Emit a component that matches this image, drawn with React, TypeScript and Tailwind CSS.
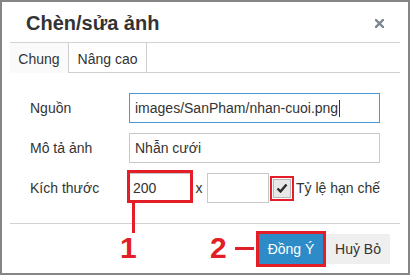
import React from 'react';

const App = () => {
  return (
    <div className="relative w-[410px] h-[275px] overflow-hidden bg-white border-2 border-[#858585] px-2 font-['Liberation_Sans',Arial,sans-serif] text-[#333]">
      {/* Header */}
      <div className="h-[41px] border-b border-[#d2d2d2] flex items-center justify-between pl-4 pr-4 pt-[2px]">
        <h1 className="text-[20px] font-bold leading-none">Chèn/sửa ảnh</h1>
        <svg width="9" height="9" viewBox="0 0 9 9" className="text-[#7d8590]">
          <path d="M1 1 L8 8 M8 1 L1 8" stroke="currentColor" strokeWidth="2.4" strokeLinecap="square" />
        </svg>
      </div>

      {/* Tabs */}
      <div className="flex h-[30px] text-[14px]">
        <div className="w-[59px] bg-[#fafafa] border-r border-[#cfcfcf] flex items-center justify-center pt-[3px]">Chung</div>
        <div className="w-[78px] border-r border-b border-[#cfcfcf] flex items-center justify-center pt-[3px]">Nâng cao</div>
        <div className="flex-1 border-b border-[#cfcfcf]"></div>
      </div>

      {/* Form */}
      <div className="pt-5 flex flex-col gap-[10px] text-[14px]">
        <div className="flex items-center">
          <div className="w-[119px] pl-5">Nguồn</div>
          <div className="w-[251px] h-[30px] border border-[#4b98d3] flex items-center pl-[5px]">
            images/SanPham/nhan-cuoi.png
            <span className="w-px h-[17px] bg-[#333] ml-px"></span>
          </div>
        </div>
        <div className="flex items-center">
          <div className="w-[119px] pl-5">Mô tả ảnh</div>
          <div className="w-[251px] h-[30px] border border-[#c8c8c8] flex items-center pl-[5px]">Nhẫn cưới</div>
        </div>
        <div className="flex items-center">
          <div className="w-[119px] pl-5">Kích thước</div>
          <div className="relative w-[62px] h-[30px] border border-[#c8c8c8] flex items-center pl-[3px]">
            200
            <div className="absolute -left-[3px] -top-[4px] w-[66px] h-[33px] border-[3px] border-[#e31e26]"></div>
          </div>
          <span className="w-[16px] text-center">x</span>
          <div className="w-[62px] h-[30px] border border-[#c8c8c8]"></div>
          <div className="ml-[1px] w-[24px] h-[25px] border-2 border-[#e31e26] flex items-center justify-center">
            <div className="w-[18px] h-[19px] bg-[#e8e8e8] border border-[#b8b8b8] flex items-center justify-center">
              <svg width="12" height="10" viewBox="0 0 12 10">
                <path d="M1.5 5.5 L4.5 8.5 L10.5 1.5" fill="none" stroke="#2b2b2b" strokeWidth="2.4" />
              </svg>
            </div>
          </div>
          <span className="ml-[2px]">Tỷ lệ hạn chế</span>
        </div>
      </div>

      {/* Footer */}
      <div className="mt-5 border-t border-[#d2d2d2] flex justify-end pr-[10px] pt-[10px] text-[14px]">
        <div className="relative">
          <button className="w-[64px] h-[30px] bg-[#2d8bc8] text-white">Đồng Ý</button>
          <div className="absolute -inset-[3px] border-[3px] border-[#e31e26]"></div>
        </div>
        <button className="ml-[3px] w-[64px] h-[30px] bg-[#efefef] text-[#333]">Huỷ Bỏ</button>
      </div>

      {/* Annotations */}
      <div className="absolute left-[130px] top-[200px] w-[3px] h-[31px] bg-[#e31e26]"></div>
      <div className="absolute left-[118px] top-[231px] text-[30px] font-bold leading-none text-[#e31e26]">1</div>
      <div className="absolute left-[208px] top-[231px] text-[30px] font-bold leading-none text-[#e31e26]">2</div>
      <div className="absolute left-[233px] top-[245px] w-[19px] h-[3px] bg-[#e31e26]"></div>
    </div>
  );
};

export default App;
